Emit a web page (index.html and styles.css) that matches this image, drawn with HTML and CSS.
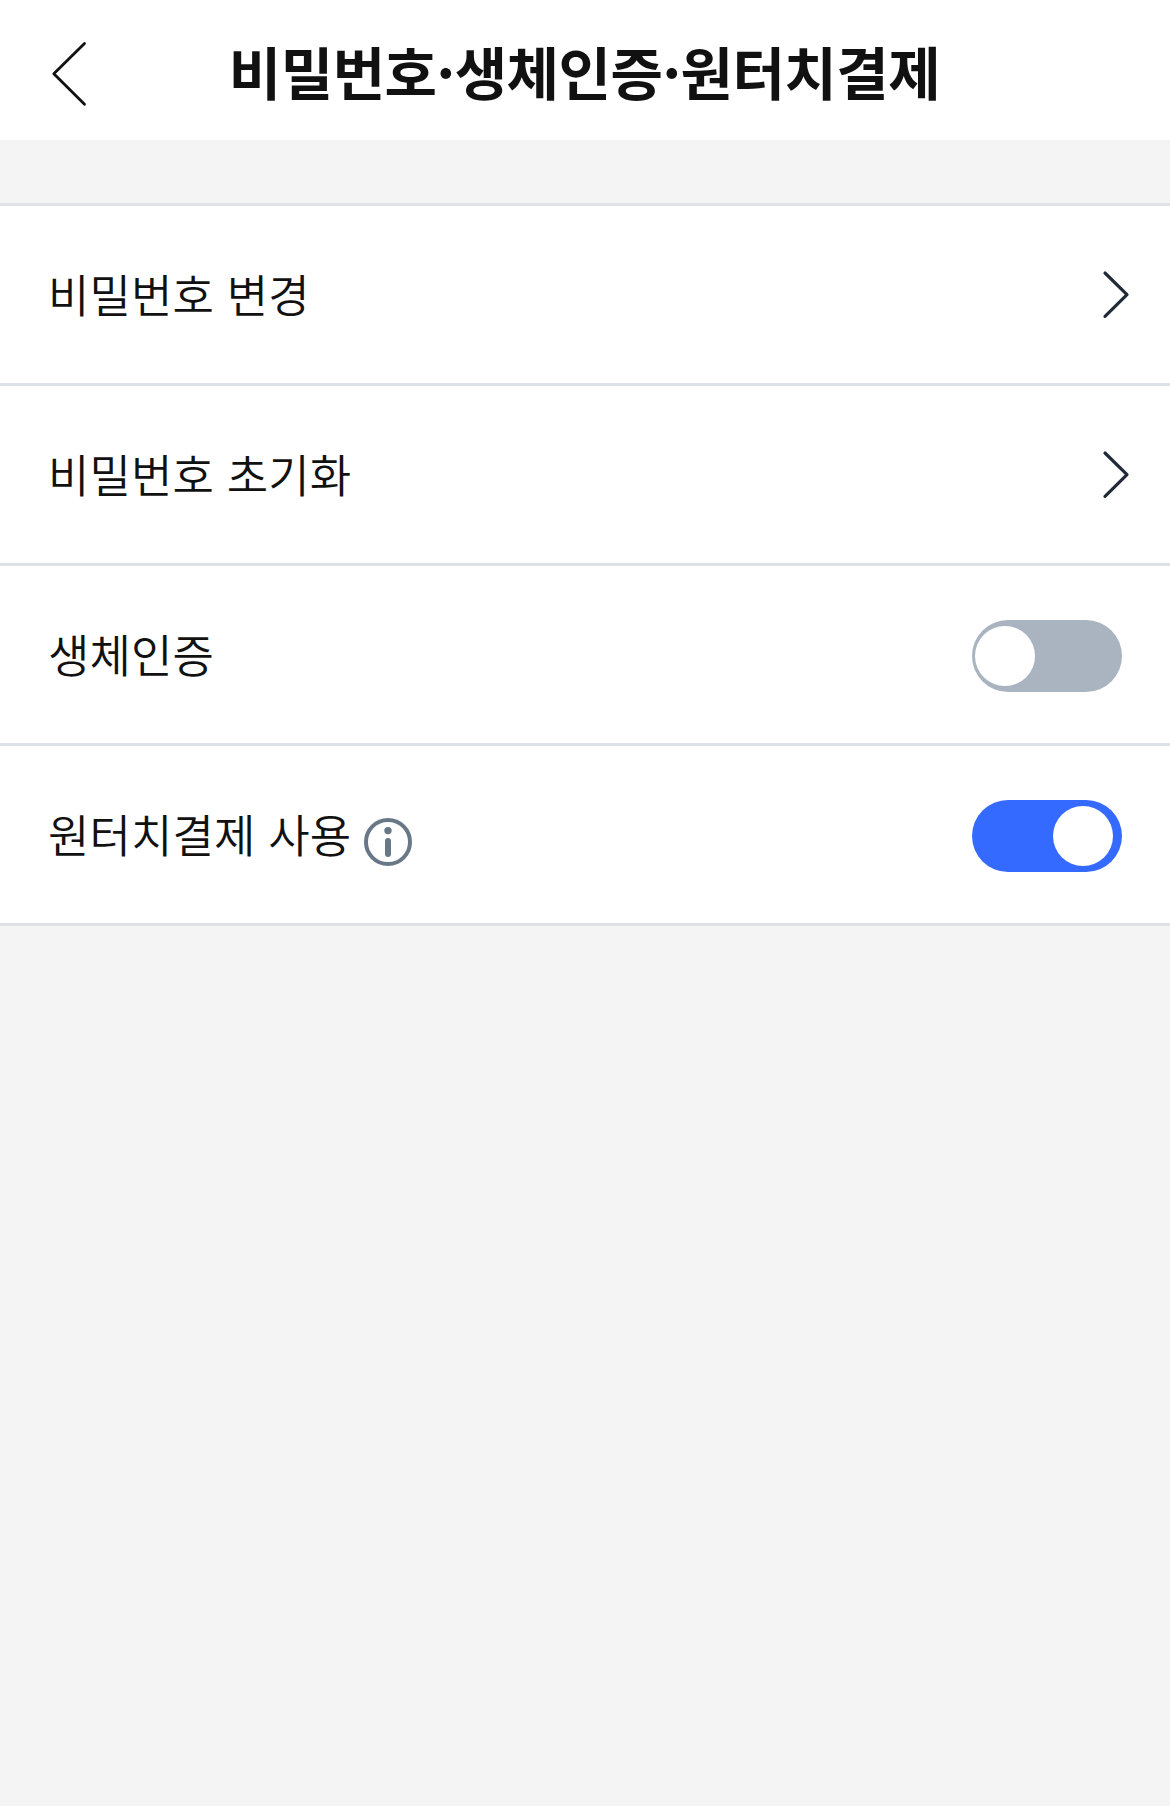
FILE: index.html
```html
<!DOCTYPE html>
<html lang="ko">
<head>
<meta charset="utf-8">
<title>비밀번호·생체인증·원터치결제</title>
<link rel="stylesheet" href="styles.css">
</head>
<body>
<header class="header">
  <svg class="back" viewBox="0 0 40 68"><path d="M36.500 3.500 5.800 33.800l30.700 30.400"/></svg>
  <h1 class="title">비밀번호·생체인증·원터치결제</h1>
</header>
<main class="list">
  <div class="row"><span class="label">비밀번호 변경</span><svg class="chevron" viewBox="0 0 30 50"><path d="M3 3l22 21.700L3 46.400"/></svg></div>
  <div class="row"><span class="label">비밀번호 초기화</span><svg class="chevron" viewBox="0 0 30 50"><path d="M3 3l22 21.700L3 46.400"/></svg></div>
  <div class="row"><span class="label">생체인증</span><span class="toggle"><span class="knob"></span></span></div>
  <div class="row"><span class="label">원터치결제 사용</span><svg class="info" viewBox="0 0 48 48"><circle class="ring" cx="24" cy="24" r="22"/><circle cx="24" cy="12.600" r="3.700"/><rect x="21" y="20" width="6" height="19" rx="3"/></svg><span class="toggle on"><span class="knob"></span></span></div>
</main>
</body>
</html>
```
FILE: styles.css
```css
* { box-sizing: border-box; }
body { margin: 0; min-height: 1806px; background: #f4f4f4; color: #111; font-family: "Noto Sans CJK KR", sans-serif; }
svg { display: block; flex: none; fill: none; stroke-linecap: round; stroke-linejoin: round; }
.header { display: flex; align-items: center; height: 140px; padding: 8px 50px 0 48px; background: #fff; }
.back { width: 40px; height: 68px; stroke: #111; stroke-width: 2.8; }
.title { flex: 1; margin: 0 39px 8px 0; text-align: center; font-size: 57px; line-height: 80px; font-weight: 700; letter-spacing: -0.5px; white-space: nowrap; }
.list { margin-top: 63px; border-top: 3px solid #dfe1e7; background: #fff; }
.row { display: flex; align-items: center; height: 180px; padding: 0 48px; border-bottom: 3px solid #dee2e6; }
.row:last-child { border-bottom-color: #dfe1e7; }
.label { margin-bottom: 1px; font-size: 45px; line-height: 66px; font-weight: 350; letter-spacing: 0.1px; white-space: nowrap; }
.chevron { width: 30px; height: 50px; margin: 0 -10px 0 auto; stroke: #212b38; stroke-width: 3.2; }
.info { width: 48px; height: 48px; margin: 15px 0 0 13px; fill: #687887; }
.ring { fill: none; stroke: #687887; stroke-width: 4; }
.toggle { display: flex; width: 150px; height: 72px; margin: 3px 0 0 auto; padding: 6px 3px; border-radius: 36px; background: #aab4c0; }
.knob { width: 60px; height: 60px; border-radius: 50%; background: #fff; }
.on { justify-content: flex-end; padding-right: 9px; background: #346aff; }
```
